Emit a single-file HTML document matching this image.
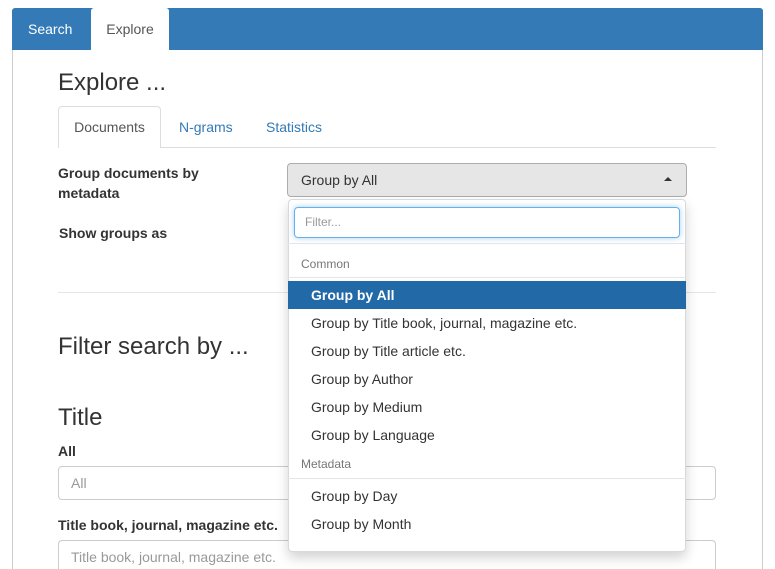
<!DOCTYPE html>
<html style="width:775px;height:569px;overflow:hidden"><head><style>
*{box-sizing:border-box;margin:0;padding:0}
body{width:775px;height:569px;overflow:hidden;background:#fff;font-family:"Liberation Sans",sans-serif;font-size:14px;color:#333;position:relative}
.a{position:absolute}
.panel{left:12px;top:8px;width:751px;height:561px;border:1px solid #ccc;border-bottom:none;border-radius:4px 4px 0 0}
.bar{left:12px;top:8px;width:751px;height:42px;background:#337ab7;border-radius:3px 3px 0 0}
.lbl{font-weight:bold}
.inp{border:1px solid #ccc;border-radius:4px;height:34px;padding:0 12px;line-height:32px;color:#999}
.it{left:288px;width:398px;height:28px;line-height:28px;padding-left:23px}
.hd{left:288px;width:398px;padding-left:13px;font-size:12px;color:#777}
.dv{left:288px;width:398px;height:1px;background:#e5e5e5}
</style></head><body>
<div class="a panel"></div>
<div class="a bar"></div>
<div class="a" style="left:28px;top:21px;color:#fff">Search</div>
<div class="a" style="left:91px;top:8px;width:78px;height:42px;background:#fff;border-radius:3px 3px 0 0;text-align:center;line-height:42px;color:#555">Explore</div>
<div class="a" style="left:58px;top:69px;font-size:24px;font-weight:500">Explore ...</div>
<div class="a" style="left:58px;top:147px;width:658px;height:1px;background:#ddd"></div>
<div class="a" style="left:58px;top:106px;width:103px;height:42px;background:#fff;border:1px solid #ddd;border-bottom:none;border-radius:4px 4px 0 0;text-align:center;line-height:40px;color:#555">Documents</div>
<div class="a" style="left:179px;top:119px;color:#337ab7">N-grams</div>
<div class="a" style="left:266px;top:119px;color:#337ab7">Statistics</div>
<div class="a lbl" style="left:58px;top:163px;line-height:20px">Group documents by<br>metadata</div>
<div class="a lbl" style="left:59px;top:225px">Show groups as</div>
<div class="a" style="left:287px;top:163px;width:400px;height:34px;background:#e6e6e6;border:1px solid #adadad;border-radius:4px;padding-left:13px;line-height:32px">Group by All</div>
<div class="a" style="left:664px;top:177px;width:0;height:0;border-left:4px solid transparent;border-right:4px solid transparent;border-bottom:4px solid #333"></div>
<div class="a" style="left:58px;top:292px;width:658px;height:1px;background:#e5e5e5"></div>
<div class="a" style="left:58px;top:333px;font-size:24px">Filter search by ...</div>
<div class="a" style="left:58px;top:404px;font-size:24px">Title</div>
<div class="a lbl" style="left:58px;top:443px">All</div>
<div class="a inp" style="left:58px;top:466px;width:658px">All</div>
<div class="a lbl" style="left:58px;top:517px">Title book, journal, magazine etc.</div>
<div class="a inp" style="left:58px;top:540px;width:658px;height:29px;border-bottom:none;border-radius:4px 4px 0 0">Title book, journal, magazine etc.</div>
<div class="a" style="left:288px;top:199px;width:398px;height:353px;background:#fff;border:1px solid rgba(0,0,0,.15);border-radius:4px;box-shadow:0 6px 12px rgba(0,0,0,.175)"></div>
<div class="a inp" style="left:294px;top:207px;width:386px;height:31px;line-height:29px;border-color:#66afe9;box-shadow:0 0 6px rgba(102,175,233,.6);font-size:12px;padding-left:10px">Filter...</div>
<div class="dv a" style="top:243px"></div>
<div class="a hd" style="top:257px">Common</div>
<div class="dv a" style="top:277px"></div>
<div class="a it" style="top:281px;background:#2269a8;color:#fff;font-weight:bold">Group by All</div>
<div class="a it" style="top:309px">Group by Title book, journal, magazine etc.</div>
<div class="a it" style="top:337px">Group by Title article etc.</div>
<div class="a it" style="top:365px">Group by Author</div>
<div class="a it" style="top:393px">Group by Medium</div>
<div class="a it" style="top:421px">Group by Language</div>
<div class="a hd" style="top:457px">Metadata</div>
<div class="dv a" style="top:478px"></div>
<div class="a it" style="top:482px">Group by Day</div>
<div class="a it" style="top:510px">Group by Month</div>
</body></html>
